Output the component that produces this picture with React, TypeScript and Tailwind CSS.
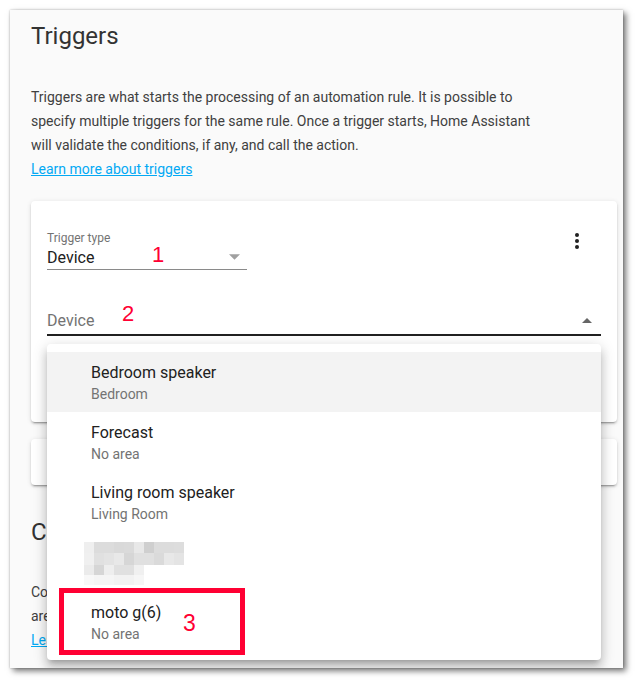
const blurRows = [
  ['bg-[#efefef]', 'bg-[#dcdcdc]', 'bg-[#dcdcdc]', 'bg-[#d9d9d9]', 'bg-[#dadada]', 'bg-[#e8e8e8]', 'bg-[#cfcfcf]', 'bg-[#dcdcdc]', 'bg-[#dcdcdc]', 'bg-[#dddddd]'],
  ['bg-[#f0f0f0]', 'bg-[#e0e0e0]', 'bg-[#e3e3e3]', 'bg-[#e8e8e8]', 'bg-[#d6d6d6]', 'bg-[#e0e0e0]', 'bg-[#e0e0e0]', 'bg-[#dadada]', 'bg-[#e8e8e8]', 'bg-[#e4e4e4]'],
  ['bg-[#ebebeb]', 'bg-[#d6d6d6]', 'bg-[#eeeeee]', 'bg-[#e0e0e0]', 'bg-[#e0e0e0]', 'bg-[#f0f0f0]', '', '', '', ''],
  ['bg-[#f8f8f8]', 'bg-[#f5f5f5]', 'bg-[#f5f5f5]', 'bg-[#f2f2f2]', 'bg-[#f2f2f2]', 'bg-[#f6f6f6]', '', '', '', ''],
];

const devices = [
  { name: 'Bedroom speaker', area: 'Bedroom' },
  { name: 'Forecast', area: 'No area' },
  { name: 'Living room speaker', area: 'Living Room' },
];

const MenuItem = ({ name, area, active }: { name: string; area: string; active?: boolean }) => (
  <div className={`h-[60px] flex flex-col justify-center pl-[44px] pt-[2px] ${active ? 'bg-[#f3f3f3]' : ''}`}>
    <div className="text-base leading-5 text-[#212121]">{name}</div>
    <div className="text-sm leading-5 mt-px text-[#737373]">{area}</div>
  </div>
);

const App = () => {
  return (
    <div className="w-[639px] h-[685px] bg-white p-[10px] font-['Roboto',sans-serif]">
      {/* Window */}
      <div className="w-[613px] h-[658px] bg-[#fafafa] overflow-hidden shadow-[3px_3px_6px_rgba(0,0,0,0.55),0_0_2px_rgba(0,0,0,0.25)]">
        <div className="pl-[21px] pr-[6px] pt-[10px]">
          {/* Triggers header */}
          <h2 className="text-2xl leading-8 text-[#333]">Triggers</h2>
          <p className="mt-[33px] text-sm leading-6 text-[#404040] w-[510px]">
            Triggers are what starts the processing of an automation rule. It is possible to specify multiple
            triggers for the same rule. Once a trigger starts, Home Assistant will validate the conditions, if any,
            and call the action.
          </p>
          <a className="block text-sm leading-6 text-[#03a9f4] underline w-fit">Learn more about triggers</a>

          {/* Trigger card */}
          <div className="mt-[20px] bg-white rounded shadow-[0_2px_2px_rgba(0,0,0,0.14),0_1px_5px_rgba(0,0,0,0.12),0_3px_1px_-2px_rgba(0,0,0,0.2)] pt-[29px] px-4 pb-[86px]">
            <div className="flex items-start justify-between">
              <div className="relative w-[200px] border-b border-[#8a8a8a]">
                <div className="text-xs leading-4 text-[#737373]">Trigger type</div>
                <div className="text-base leading-[23px] text-[#212121]">Device</div>
                <svg className="absolute right-[7px] bottom-[9px]" width="11" height="6" viewBox="0 0 10 5">
                  <path d="M0 0L5 5L10 0Z" fill="#a0a0a0" />
                </svg>
                <span className="absolute left-[105px] top-[13px] text-[22px] leading-6 text-[#ff0033] font-['Liberation_Sans',sans-serif]">1</span>
              </div>
              <svg className="-mt-px mr-[12px]" width="24" height="24" viewBox="0 0 24 24">
                <circle cx="12" cy="6" r="2" fill="#212121" />
                <circle cx="12" cy="12" r="2" fill="#212121" />
                <circle cx="12" cy="18" r="2" fill="#212121" />
              </svg>
            </div>

            {/* Device field with open menu */}
            <div className="relative mt-[38px]">
              <div className="relative pt-px pb-px border-b-2 border-[#212121]">
                <div className="text-base leading-6 text-[#737373]">Device</div>
                <svg className="absolute right-[9px] top-[10px]" width="10" height="5" viewBox="0 0 10 5">
                  <path d="M0 5L5 0L10 5Z" fill="#666" />
                </svg>
                <span className="absolute left-[75px] top-[-6px] text-[22px] leading-6 text-[#ff0033] font-['Liberation_Sans',sans-serif]">2</span>
              </div>

              <div className="absolute left-0 right-0 top-full mt-2 z-10 bg-white rounded-sm py-2 shadow-[0_5px_5px_-3px_rgba(0,0,0,0.2),0_8px_10px_1px_rgba(0,0,0,0.14),0_3px_14px_2px_rgba(0,0,0,0.12)]">
                {devices.map((d, i) => (
                  <MenuItem key={d.name} name={d.name} area={d.area} active={i === 0} />
                ))}
                {/* pixelated entry */}
                <div className="h-[60px] pl-[37px] pt-[10px]">
                  <div className="grid grid-cols-[repeat(10,10px)] grid-rows-[11px_12px_10px_10px] w-fit">
                    {blurRows.flat().map((c, i) => (
                      <div key={i} className={c} />
                    ))}
                  </div>
                </div>
                <MenuItem name="moto g(6)" area="No area" />

                {/* annotation */}
                <div className="absolute left-[12px] top-[244px] w-[186px] h-[67px] border-[5px] border-[#ff0033]">
                  <span className="absolute left-[119px] top-[18px] text-[23px] leading-6 text-[#ff0033] font-['Liberation_Sans',sans-serif]">3</span>
                </div>
              </div>
            </div>
          </div>

          <div className="mt-[17px] h-[46px] bg-white rounded shadow-[0_2px_2px_rgba(0,0,0,0.14),0_1px_5px_rgba(0,0,0,0.12),0_3px_1px_-2px_rgba(0,0,0,0.2)]" />

          {/* Conditions header */}
          <h2 className="mt-[31px] text-2xl leading-8 text-[#333]">Conditions</h2>
          <p className="mt-[32px] text-sm leading-6 text-[#404040] w-[510px]">
            Conditions are optional parts of an automation rule. Conditions
            <br />
            are very different from triggers.
          </p>
          <a className="block text-sm leading-6 text-[#03a9f4] underline w-fit">Learn more about conditions</a>
        </div>
      </div>
    </div>
  );
};

export default App;
